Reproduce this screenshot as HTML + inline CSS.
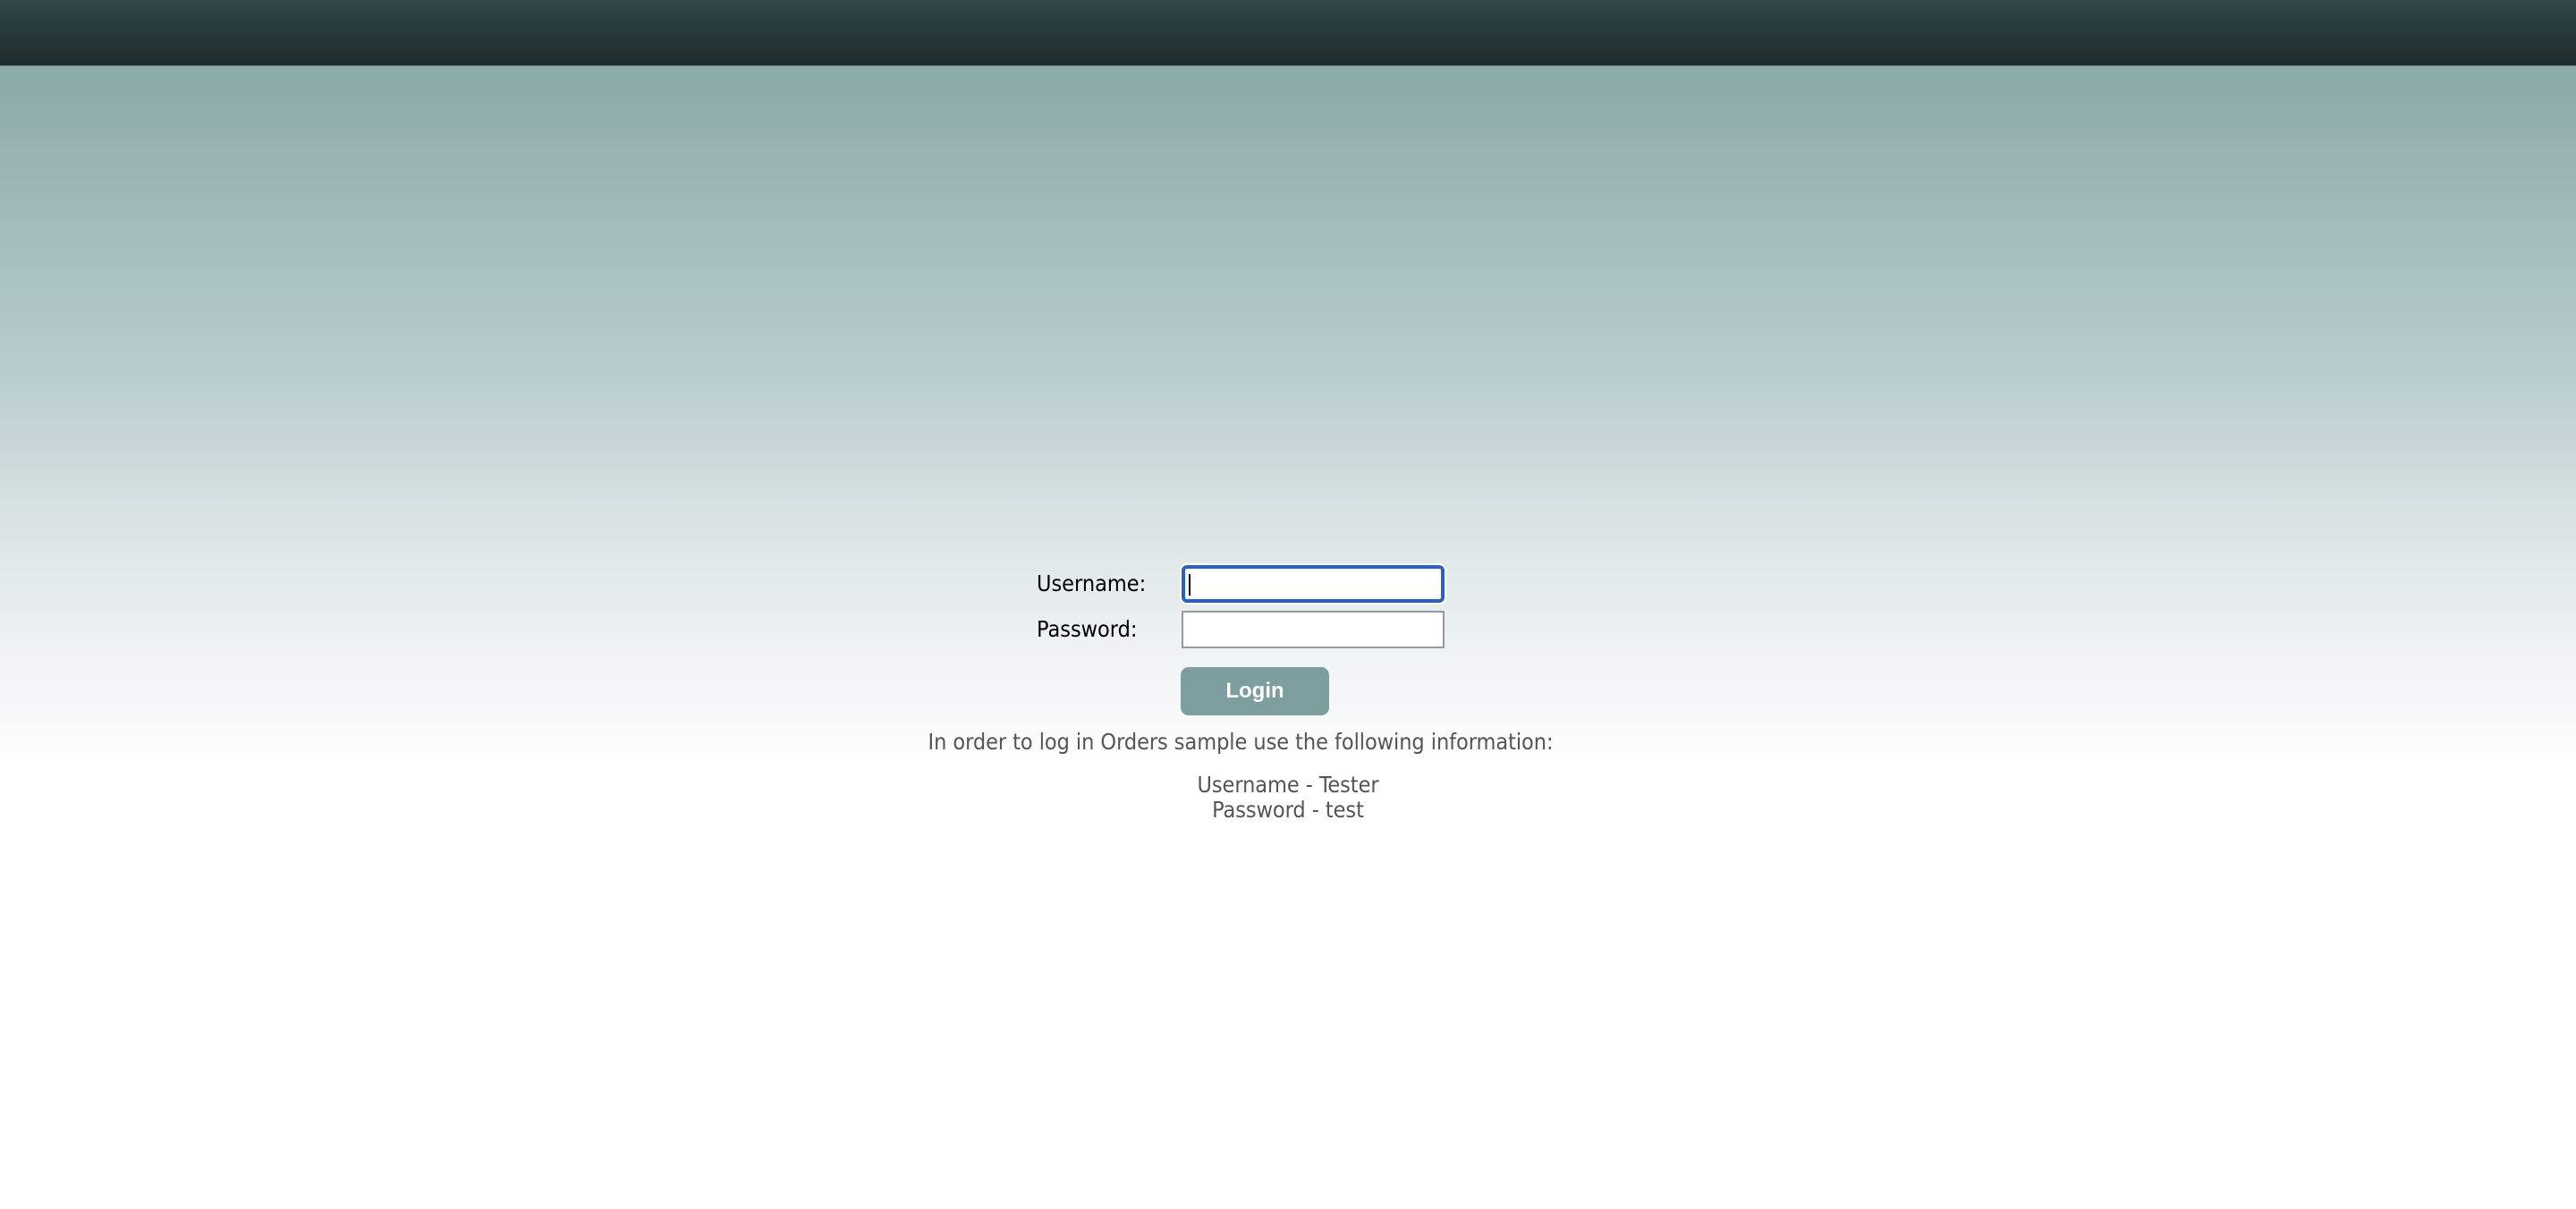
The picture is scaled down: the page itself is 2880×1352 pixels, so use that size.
<!DOCTYPE html>
<html><head><meta charset="utf-8"><style>
html,body{margin:0;padding:0;width:2880px;height:1352px;overflow:hidden}
body{position:relative;background:linear-gradient(to bottom,#8aa9a9 73px,#b9cdcf 420px,#e3eaeb 640px,#ffffff 860px,#fff 1352px);font-family:"DejaVu Sans Condensed","DejaVu Sans",sans-serif}
.hdr{position:absolute;left:0;top:0;width:2880px;height:73px;background:linear-gradient(#304749,#1e2b2c);border-bottom:1px solid #5f7d7e}
.lbl{position:absolute;left:1159px;font-size:25px;color:#000;line-height:30px}
.inp{position:absolute;left:1321px;width:294px;background:#fff;box-sizing:border-box}
.btn{position:absolute;left:1320px;top:746px;width:166px;height:54px;background:#7d9e9f;border-radius:9px;color:#fff;font:bold 24px "Liberation Sans",sans-serif;text-align:center;line-height:54px}
.txt{position:absolute;font-size:25px;color:#555;line-height:28px;text-align:center;letter-spacing:-0.05px}
</style></head><body>
<div class="hdr"></div>
<div class="lbl" style="top:638px">Username:</div>
<div class="lbl" style="top:689px">Password:</div>
<div class="inp" style="top:632px;height:42px;border:4px solid #2a5fc8;border-radius:6px;box-shadow:0 0 0 2px #fff"><div style="position:absolute;left:4px;top:6px;width:2px;height:24px;background:#000"></div></div>
<div class="inp" style="top:683px;height:42px;border:2px solid #9a9a9a"></div>
<div class="btn">Login</div>
<div class="txt" style="left:987px;width:800px;top:816px">In order to log in Orders sample use the following information:</div>
<div class="txt" style="left:1240px;width:400px;top:864px">Username - Tester<br>Password - test</div>
</body></html>
